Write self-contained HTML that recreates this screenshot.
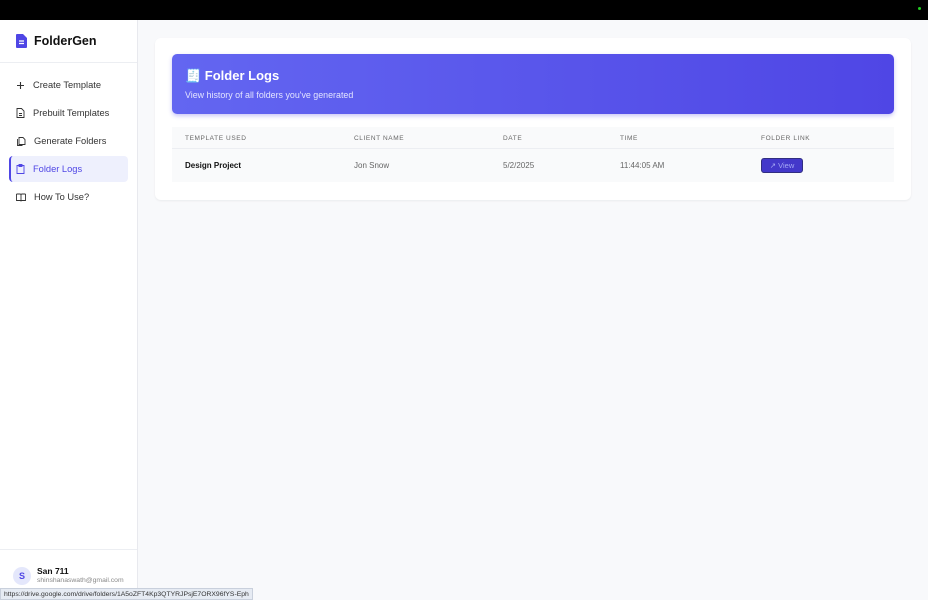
<!DOCTYPE html>
<html><head><meta charset="utf-8"><style>
*{box-sizing:border-box;margin:0;padding:0}
body{width:928px;height:600px;overflow:hidden;font-family:"Liberation Sans",sans-serif;background:#f8f9fb;position:relative}
.top{position:absolute;left:0;top:0;width:928px;height:20px;background:#000}
.dot{position:absolute;right:7px;top:7px;width:3px;height:3px;border-radius:50%;background:#2c2}
.side{position:absolute;left:0;top:20px;width:138px;height:580px;background:#fff;border-right:1px solid #e8e9ee}
.logo{height:43px;border-bottom:1px solid #eceef2;display:flex;align-items:center;padding-left:16px;font-weight:bold;font-size:12.5px;color:#111}
.nav{padding-top:7px}
.item{height:26px;margin:2px 9px 2px 9px;display:flex;align-items:center;padding-left:7px;font-size:9.3px;color:#333;border-radius:4px}
.item svg{margin-right:8px}
.item.act{background:#eef0fd;color:#4f46e5;border-left:2px solid #4f46e5;padding-left:5px}
.user{position:absolute;left:0;bottom:0;width:137px;height:51px;border-top:1px solid #eceef2}
.av{position:absolute;left:13px;top:17px;width:18px;height:18px;border-radius:50%;background:#e4e7fb;color:#4f46e5;font-size:9px;font-weight:bold;text-align:center;line-height:18px}
.un{position:absolute;left:37px;top:16px;font-size:8.5px;font-weight:bold;color:#111}
.ue{position:absolute;left:37px;top:27px;font-size:6.8px;color:#888}
.url{position:absolute;left:0;bottom:0;height:12px;background:#e6ebf3;border:1px solid #c9d0dc;font-size:6.8px;color:#333;padding:1px 3px;line-height:9px}
.card{position:absolute;left:155px;top:38px;width:756px;height:162px;background:#fff;border-radius:6px;box-shadow:0 1px 2px rgba(0,0,0,.06)}
.hero{position:absolute;left:17px;top:16px;width:722px;height:60px;border-radius:5px;background:linear-gradient(90deg,#6366f1,#4f46e5);box-shadow:0 2px 4px rgba(79,70,229,.3);color:#fff}
.hero h1{position:absolute;left:13px;top:14px;font-size:13px;font-weight:bold}
.hero p{position:absolute;left:13px;top:36px;font-size:8.9px;color:#e3e4ff}
.tbl{position:absolute;left:17px;top:89px;width:722px;height:55px;background:#f9fafb}
.th{height:22px;border-bottom:1px solid #eceef2;position:relative;font-size:6.5px;letter-spacing:.6px;color:#666}
.th span,.tr span{position:absolute;top:8px}
.tr{position:relative;height:33px;font-size:8px;color:#666}
.tr span{top:12px}
.btn{position:absolute;left:589px;top:9px;width:42px;height:15px;background:#4338ca;border:1px solid #312e81;border-radius:3px;color:#a5a8f5;font-size:7.5px;line-height:13px;text-align:center}
</style></head><body>
<div class="top"><div class="dot"></div></div>
<div class="side">
<div class="logo"><svg width="11" height="14" viewBox="0 0 11 14" style="margin-right:7px"><path d="M1 0h6l4 4v9a1 1 0 0 1-1 1H1a1 1 0 0 1-1-1V1a1 1 0 0 1 1-1z" fill="#4f46e5"/><path d="M3 7h5M3 9.5h5" stroke="#fff" stroke-width="1.2"/></svg>FolderGen</div>
<div class="nav">
<div class="item"><svg width="9" height="9" viewBox="0 0 9 9"><path d="M4.5 1v7M1 4.5h7" stroke="#333" stroke-width="1.1"/></svg>Create Template</div>
<div class="item"><svg width="9" height="10" viewBox="0 0 9 10"><path d="M1 .5h4.5L8 3v6.5H1z M3 5.5h3M3 7.5h3" stroke="#333" fill="none" stroke-width=".9"/></svg>Prebuilt Templates</div>
<div class="item"><svg width="10" height="10" viewBox="0 0 10 10"><path d="M3 1.5h4l2 2v5H3z M1.5 3v6.5h5" stroke="#333" fill="none" stroke-width=".9"/></svg>Generate Folders</div>
<div class="item act"><svg width="9" height="10" viewBox="0 0 9 10"><path d="M1 1.5h7v8H1z M3 .5h3v2H3z" stroke="#4f46e5" fill="none" stroke-width=".9"/></svg>Folder Logs</div>
<div class="item"><svg width="10" height="9" viewBox="0 0 10 9"><path d="M.5 1h3.5a1 1 0 0 1 1 1v6.5M9.5 1H6a1 1 0 0 0-1 1M.5 1v6.5H5h4.5V1" stroke="#333" fill="none" stroke-width=".9"/></svg>How To Use?</div>
</div>
<div class="user"><div class="av">S</div><div class="un">San 711</div><div class="ue">shinshanaswath@gmail.com</div></div>
</div>
<div class="url">https://drive.google.com/drive/folders/1A5oZFT4Kp3QTYRJPsjE7ORX96fYS-Eph</div>
<div class="card">
<div class="hero"><h1>🧾 Folder Logs</h1><p>View history of all folders you've generated</p></div>
<div class="tbl">
<div class="th"><span style="left:13px">TEMPLATE USED</span><span style="left:182px">CLIENT NAME</span><span style="left:331px">DATE</span><span style="left:448px">TIME</span><span style="left:589px">FOLDER LINK</span></div>
<div class="tr"><span style="left:13px;color:#111;font-weight:bold">Design Project</span><span style="left:182px">Jon Snow</span><span style="left:331px">5/2/2025</span><span style="left:448px">11:44:05 AM</span><div class="btn">↗ View</div></div>
</div>
</div>
</body></html>
